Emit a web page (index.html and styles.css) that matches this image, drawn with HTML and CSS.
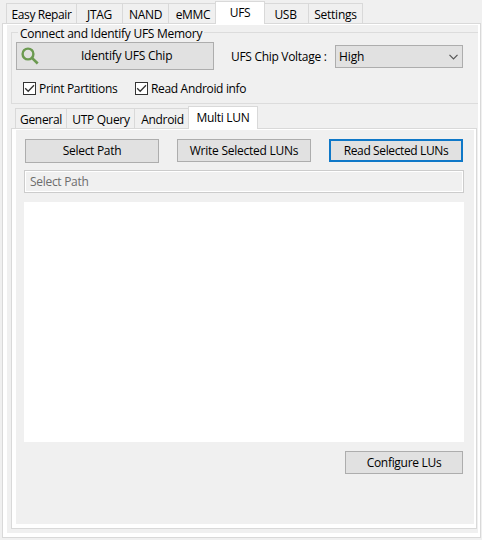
FILE: index.html
```
<!DOCTYPE html>
<html lang="en">
<head>
<meta charset="utf-8">
<title>UFS</title>
<link rel="stylesheet" href="styles.css">
</head>
<body>
<div class="tabs main-tabs">
  <div class="tab easy"><span class="t-easy">Easy Repair</span></div>
  <div class="tab jtag"><span class="t-jtag">JTAG</span></div>
  <div class="tab nand"><span class="t-nand">NAND</span></div>
  <div class="tab emmc"><span class="t-emmc">eMMC</span></div>
  <div class="tab ufs active"><span class="t-ufs">UFS</span></div>
  <div class="tab usb"><span class="t-usb">USB</span></div>
  <div class="tab settings"><span class="t-settings">Settings</span></div>
</div>
<main class="page">
  <div class="page-body">
    <section class="group">
      <h1 class="legend"><span class="t-legend">Connect and Identify UFS Memory</span></h1>
      <div class="row identify-row">
        <button class="btn identify">
          <svg class="search" viewBox="0 0 18 18"><circle cx="7" cy="7" r="5.4" fill="none" stroke="#6b9a50" stroke-width="2.4"/><path d="M10.9 10.9L16.7 16.5" stroke="#6b9a50" stroke-width="2.7"/></svg>
          <span class="t-identify">Identify UFS Chip</span>
        </button>
        <span class="volt-label"><span class="t-volt">UFS Chip Voltage :</span></span>
        <div class="combo"><span class="t-high">High</span>
          <svg class="chevron" viewBox="0 0 9 6"><path d="M.5 .8L4.5 4.8L8.5 .8" fill="none" stroke="#555" stroke-width="1.2"/></svg>
        </div>
      </div>
      <div class="row checks">
        <label class="check print"><span class="box"><svg viewBox="0 0 11 11"><path d="M1.2 5.2L4.2 8.2L10 2.2" fill="none" stroke="#333" stroke-width="1.3"/></svg></span><span class="t-print">Print Partitions</span></label>
        <label class="check"><span class="box"><svg viewBox="0 0 11 11"><path d="M1.2 5.2L4.2 8.2L10 2.2" fill="none" stroke="#333" stroke-width="1.3"/></svg></span><span class="t-info">Read Android info</span></label>
      </div>
    </section>
    <div class="tabs sub-tabs">
      <div class="tab general"><span class="t-general">General</span></div>
      <div class="tab utp"><span class="t-utp">UTP Query</span></div>
      <div class="tab android"><span class="t-android">Android</span></div>
      <div class="tab multi active"><span class="t-multi">Multi LUN</span></div>
    </div>
    <section class="sub-page">
      <div class="sub-body">
        <div class="row actions">
          <button class="btn tall"><span class="t-select">Select Path</span></button>
          <button class="btn"><span class="t-write">Write Selected LUNs</span></button>
          <button class="btn focus"><span class="t-read">Read Selected LUNs</span></button>
        </div>
        <div class="field"><span class="t-path">Select Path</span></div>
        <div class="list"></div>
        <button class="btn configure"><span class="t-conf">Configure LUs</span></button>
      </div>
    </section>
  </div>
</main>
</body>
</html>
```
FILE: styles.css
```
* { box-sizing: border-box; }
body {
  margin: 0;
  width: 482px;
  height: 540px;
  overflow: hidden;
  background: #f0f0f0;
  color: #000;
  font: 12px/16px "Open Sans", "Noto Sans", sans-serif;
  letter-spacing: -0.3px;
  white-space: nowrap;
}
span { white-space: nowrap; }
.row { display: flex; }

.tabs { display: flex; align-items: flex-end; position: relative; z-index: 1; }
.tab {
  height: 20px;
  border: 1px solid #d9d9d9;
  border-width: 1px 1px 0 0;
  padding-top: 2px;
  display: flex;
  justify-content: center;
  align-items: center;
}
.tab:first-child { border-left-width: 1px; }
.tab.active { background: #fff; border-left-width: 1px; height: 23px; margin-bottom: -1px; padding: 0 0 1px; }
.main-tabs { height: 23px; padding-left: 6px; }
.easy { width: 71px; }
.jtag { width: 46px; }
.nand { width: 46px; }
.emmc { width: 46px; border-right: 0; padding-left: 2px; }
.ufs { width: 50px; }
.usb { width: 44px; padding-right: 2px; }
.settings { width: 54px; }
.t-settings { letter-spacing: -0.25px; }
.t-easy { letter-spacing: -0.4px; }

.page {
  margin: 0 1px 0 2px;
  height: 515px;
  border: 1px solid #d9d9d9;
  background: #fff;
  padding: 1px 2px 4px 4px;
}
.page-body { height: 508px; background: #f0f0f0; padding: 7px 0 0 4px; }
.group {
  height: 72px;
  border: 1px solid #dcdcdc;
  border-right: 0;
  padding-left: 4px;
}
.legend {
  margin: -8px 0 0 2px;
  padding: 0 2px;
  width: 186px;
  height: 16px;
  background: #f0f0f0;
  font-size: 12px;
  font-weight: 400;
  line-height: 18px;
}
.t-legend { letter-spacing: -0.27px; }
.btn {
  height: 23px;
  padding: 0;
  border: 1px solid #adadad;
  background: #e1e1e1;
  font: inherit;
  letter-spacing: inherit;
  color: inherit;
  display: flex;
  justify-content: center;
  align-items: center;
}
.identify-row { margin-top: 1px; height: 28px; align-items: center; }
.identify { width: 198px; height: 28px; justify-content: flex-start; }
.search { width: 18px; height: 18px; margin: 0 42px 0 4px; }
.t-identify { letter-spacing: -0.23px; }
.volt-label { width: 104px; margin-left: 17px; padding-top: 2px; }
.combo {
  width: 128px;
  height: 23px;
  margin-top: 1px;
  padding: 1px 4px 0 3px;
  border: 1px solid #adadad;
  background: #e1e1e1;
  display: flex;
  align-items: center;
  justify-content: space-between;
}
.t-high { letter-spacing: -0.1px; }
.chevron { width: 9px; height: 6px; }
.checks { margin: 12px 0 0 7px; height: 13px; }
.check { display: flex; align-items: center; }
.print { width: 112px; }
.t-print { margin-left: -1px; letter-spacing: -0.33px; }
.t-info { margin-left: -1px; letter-spacing: -0.33px; }
.box { width: 13px; height: 13px; margin-right: 4px; border: 1px solid #333; background: #fff; display: flex; }
.box svg { width: 11px; height: 11px; }

.sub-tabs { height: 24px; padding-left: 4px; }
.general { width: 52px; }
.utp { width: 68px; padding-left: 1px; }
.android { width: 53px; border-right: 0; padding-left: 2px; }
.multi { width: 70px; }
.sub-page {
  width: 466px;
  height: 401px;
  border: 1px solid #d9d9d9;
  background: #fff;
  padding: 1px 2px 4px 4px;
}
.sub-body { height: 394px; background: #f0f0f0; padding: 9px 10px 0 8px; }
.actions { height: 24px; padding-left: 1px; gap: 18px; }
.actions .btn { width: 134px; }
.actions .tall { height: 24px; }
.actions .focus { border: 2px solid #0f78c8; }
.t-write { letter-spacing: -0.25px; }
.t-read { letter-spacing: -0.38px; }
.field {
  height: 23px;
  margin-top: 7px;
  padding-left: 5px;
  border: 1px solid #ccc;
  box-shadow: inset 0 0 0 1px #fff;
  color: #6d6d6d;
  display: flex;
  align-items: center;
}
.list { height: 240px; margin-top: 9px; background: #fff; }
.configure { width: 118px; margin: 9px 0 0 321px; }
```
